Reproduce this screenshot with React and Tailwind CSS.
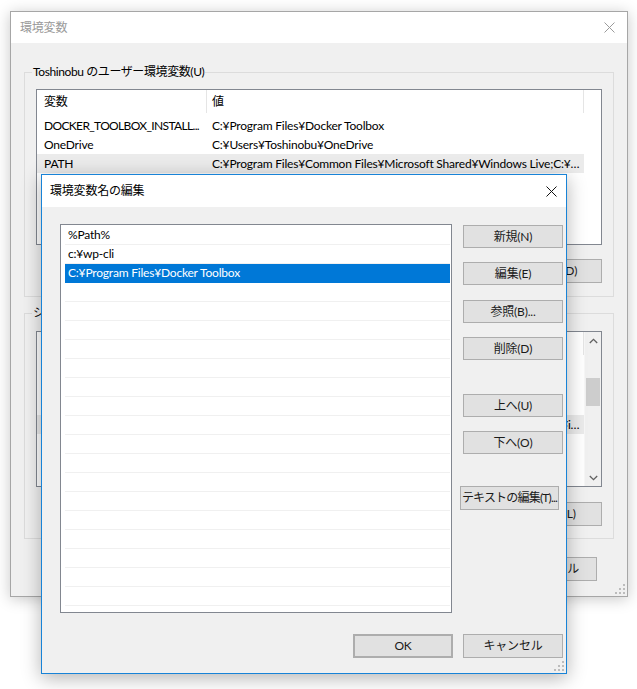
const XIcon = ({ className }) => (
  <svg width="11" height="11" viewBox="0 0 11 11" className={className}>
    <path d="M0.5 0.5L10.5 10.5M10.5 0.5L0.5 10.5" stroke="currentColor" strokeWidth="1" fill="none" />
  </svg>
)

const Grip = () => (
  <svg width="10" height="10" viewBox="0 0 10 10" className="absolute right-[2px] bottom-[2px]">
    {[[8, 0], [4, 4], [8, 4], [0, 8], [4, 8], [8, 8]].map(([x, y]) => (
      <rect key={`${x}-${y}`} x={x} y={y} width="2" height="2" fill="#bcbcbc" />
    ))}
  </svg>
)

const Chevron = ({ down }) => (
  <svg width="9" height="6" viewBox="0 0 9 6">
    <path
      d={down ? 'M0.8 1L4.5 4.7L8.2 1' : 'M0.8 5L4.5 1.3L8.2 5'}
      stroke="#606060"
      strokeWidth="1.3"
      fill="none"
    />
  </svg>
)

const Btn = ({ children, className = '' }) => (
  <div
    className={`flex items-center justify-center shrink-0 border border-[#adadad] bg-[#e1e1e1] text-[#1a1a1a] whitespace-nowrap ${className}`}
  >
    {children}
  </div>
)

const userVars = [
  { name: 'DOCKER_TOOLBOX_INSTALL...', value: 'C:¥Program Files¥Docker Toolbox', tight: true },
  { name: 'OneDrive', value: 'C:¥Users¥Toshinobu¥OneDrive' },
  {
    name: 'PATH',
    value: 'C:¥Program Files¥Common Files¥Microsoft Shared¥Windows Live;C:¥Program Files¥Docker Toolbox',
    selected: true,
  },
]

const systemVars = [
  { name: 'ComSpec', value: 'C:¥WINDOWS¥system32¥cmd.exe' },
  { name: 'DriverData', value: 'C:¥Windows¥System32¥Drivers¥DriverData' },
  { name: 'NUMBER_OF_PROCESSORS', value: '4' },
  {
    name: 'Path',
    value: 'C:¥ProgramData¥Oracle¥Java¥javapath;C:¥Program Files (x86)¥Intel¥iCLS Client¥;C:¥Program Files¥Intel¥iCLS Client¥;C:¥WINDOWS¥system32',
    selected: true,
  },
  { name: 'PATHEXT', value: '.COM;.EXE;.BAT;.CMD;.VBS;.VBE;.JS;.JSE;.WSF;.WSH;.MSC' },
  { name: 'PROCESSOR_ARCHITECTURE', value: 'AMD64' },
  { name: 'PROCESSOR_IDENTIFIER', value: 'Intel64 Family 6 Model 61 Stepping 4, GenuineIntel' },
]

const VarList = ({ rows, scrollbar }) => (
  <div className="flex h-[156px] border border-[#828790] bg-white overflow-hidden">
    <div className="flex flex-col w-[547px] shrink-0">
      {/* Column header */}
      <div className="flex h-[23px] items-center shrink-0">
        <div className="w-[170px] h-full flex items-center pl-[7px] border-r border-[#e5e5e5]">変数</div>
        <div className="w-[377px] h-full flex items-center pl-[5px] border-r border-[#e5e5e5]">値</div>
      </div>
      <div className="pt-[3px] flex flex-col">
        {rows.map(row => (
          <div
            key={row.name}
            className={`flex h-[19px] items-center shrink-0 ${row.selected ? 'bg-[#ebebeb]' : ''}`}
          >
            <div
              className={`w-[170px] pl-[7px] pr-[3px] truncate ${row.tight ? 'tracking-[-0.65px]' : ''}`}
            >
              {row.name}
            </div>
            <div className="w-[377px] pl-[5px] pr-[4px] truncate">{row.value}</div>
          </div>
        ))}
      </div>
    </div>
    {scrollbar && (
      <div className="flex flex-col w-[17px] bg-[#f0f0f0] border-l border-[#f7f7f7]">
        <div className="h-[17px] flex items-center justify-center">
          <Chevron />
        </div>
        <div className="flex-1 flex flex-col">
          <div className="mt-[29px] mx-[1px] h-[28px] bg-[#cdcdcd]" />
        </div>
        <div className="h-[17px] flex items-center justify-center">
          <Chevron down />
        </div>
      </div>
    )}
  </div>
)

const GroupBox = ({ label, children, className = '' }) => (
  <div className={`relative border border-[#dcdcdc] px-[11px] ${className}`}>
    <span className="absolute left-[7px] top-[-9px] px-[1px] leading-[16px] bg-[#f0f0f0] tracking-[-0.4px]">
      {label}
    </span>
    {children}
  </div>
)

const pathEntries = ['%Path%', 'c:¥wp-cli', 'C:¥Program Files¥Docker Toolbox']

export default function App() {
  const emptyRows = Array.from({ length: 19 }, (_, i) => i)

  return (
    <div className="relative w-[637px] h-[689px] bg-white overflow-hidden text-[12px] text-[#000] tracking-[-0.2px] font-['Lato','Noto_Sans_CJK_JP',sans-serif]">
      {/* Background window: 環境変数 */}
      <div className="absolute left-[10px] top-[11px] w-[618px] h-[586px] flex flex-col border border-[#a6a6a6] bg-[#f0f0f0] shadow-[0_2px_14px_rgba(0,0,0,0.22)]">
        <div className="h-[31px] shrink-0 flex items-center justify-between pl-[9px] pr-[12px] bg-white">
          <span className="text-[#9a9a9a]">環境変数</span>
          <XIcon className="text-[#9a9a9a]" />
        </div>

        <div className="flex flex-col px-[13px] pt-[29px]">
          <GroupBox label="Toshinobu のユーザー環境変数(U)" className="pt-[16px] pb-[13px]">
            <VarList rows={userVars} />
            <div className="flex justify-end gap-[10px] mt-[14px]">
              <Btn className="w-[88px] h-[24px]">新規(N)...</Btn>
              <Btn className="w-[88px] h-[24px]">編集(E)...</Btn>
              <Btn className="w-[88px] h-[24px]">削除(D)</Btn>
            </div>
          </GroupBox>

          <GroupBox label="システム環境変数(S)" className="mt-[16px] pt-[17px] pb-[12px]">
            <VarList rows={systemVars} scrollbar />
            <div className="flex justify-end gap-[10px] mt-[15px]">
              <Btn className="w-[88px] h-[24px]">新規(W)...</Btn>
              <Btn className="w-[88px] h-[24px]">編集(I)...</Btn>
              <Btn className="w-[88px] h-[24px]">削除(L)</Btn>
            </div>
          </GroupBox>

          <div className="flex justify-end gap-[10px] mt-[18px] pr-[17px]">
            <Btn className="w-[95px] h-[24px]">OK</Btn>
            <Btn className="w-[95px] h-[24px]">キャンセル</Btn>
          </div>
        </div>
        <Grip />
      </div>

      {/* Foreground dialog: 環境変数名の編集 */}
      <div className="absolute left-[41px] top-[174px] w-[526px] h-[500px] flex flex-col border border-[#1883d7] bg-[#f0f0f0] shadow-[0_4px_18px_rgba(0,0,0,0.3)]">
        <div className="h-[32px] shrink-0 flex items-center justify-between pl-[8px] pr-[9px] bg-white">
          <span>環境変数名の編集</span>
          <XIcon className="text-[#111]" />
        </div>

        <div className="flex flex-col pl-[18px] pr-[3px] pt-[17px]">
          <div className="flex">
            {/* Path entries list */}
            <div className="w-[392px] h-[389px] shrink-0 border border-[#828790] bg-white overflow-hidden pt-[1px] pl-[4px] pr-[1px]">
              {pathEntries.map((entry, i) => (
                <div
                  key={entry}
                  className={`h-[19px] pl-[3px] leading-[18px] border-b ${
                    i === 2 ? 'bg-[#0078d7] text-white border-[#0078d7]' : 'border-[#f0f0f0]'
                  }`}
                >
                  {entry}
                </div>
              ))}
              {emptyRows.map(i => (
                <div key={i} className="h-[19px] border-b border-[#f0f0f0]" />
              ))}
            </div>

            {/* Side buttons */}
            <div className="flex flex-col ml-[11px] w-[100px]">
              <Btn className="w-[100px] h-[23px] mt-[1px]">新規(N)</Btn>
              <Btn className="w-[100px] h-[23px] mt-[14px]">編集(E)</Btn>
              <Btn className="w-[100px] h-[23px] mt-[15px]">参照(B)...</Btn>
              <Btn className="w-[100px] h-[23px] mt-[14px]">削除(D)</Btn>
              <Btn className="w-[100px] h-[23px] mt-[34px]">上へ(U)</Btn>
              <Btn className="w-[100px] h-[23px] mt-[14px]">下へ(O)</Btn>
              <Btn className="w-[99px] h-[24px] mt-[32px] -ml-[3px] tracking-[-0.8px]">テキストの編集(T)...</Btn>
            </div>
          </div>

          <div className="flex justify-end gap-[10px] mt-[21px]">
            <Btn className="w-[100px] h-[24px] border-2 border-[#0078d7]">OK</Btn>
            <Btn className="w-[100px] h-[24px]">キャンセル</Btn>
          </div>
        </div>
        <Grip />
      </div>
    </div>
  )
}
